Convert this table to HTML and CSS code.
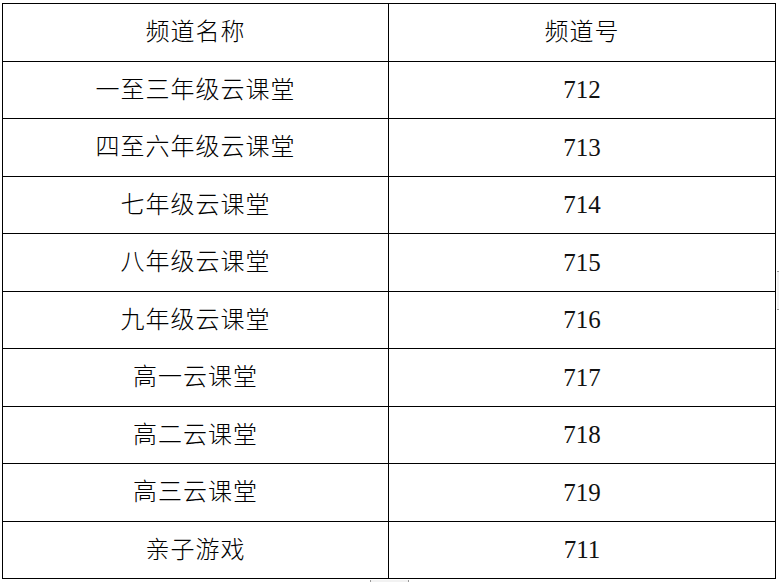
FILE: index.html
```html
<!DOCTYPE html>
<html lang="zh">
<head>
<meta charset="utf-8">
<link rel="stylesheet" href="styles.css">
</head>
<body>
<table class="channels">
  <tr><td>频道名称</td><td>频道号</td></tr>
  <tr><td>一至三年级云课堂</td><td class="num">712</td></tr>
  <tr><td>四至六年级云课堂</td><td class="num">713</td></tr>
  <tr><td>七年级云课堂</td><td class="num">714</td></tr>
  <tr><td>八年级云课堂</td><td class="num">715</td></tr>
  <tr><td>九年级云课堂</td><td class="num">716</td></tr>
  <tr><td>高一云课堂</td><td class="num">717</td></tr>
  <tr><td>高二云课堂</td><td class="num">718</td></tr>
  <tr><td>高三云课堂</td><td class="num">719</td></tr>
  <tr><td>亲子游戏</td><td class="num">711</td></tr>
</table>
<div class="handle-right"></div>
<div class="handle-bottom"></div>
</body>
</html>
```
FILE: styles.css
```css
html, body {
  margin: 0;
  padding: 0;
  background: #fff;
}
body {
  position: relative;
  width: 779px;
  height: 582px;
  overflow: hidden;
  font-family: "Liberation Serif", "Noto Sans CJK SC", serif;
  color: #000;
}
.channels {
  border-collapse: collapse;
  margin: 3px 0 0 2px;
  width: 774px;
  table-layout: fixed;
}
.channels td {
  border: 1.5px solid #000;
  height: 56.5px;
  padding: 0;
  text-align: center;
  vertical-align: middle;
  font-size: 24px;
  letter-spacing: 1px;
  font-weight: 300;
  line-height: 1;
}
.channels td:first-child {
  width: 385px;
}
.channels .num {
  font-size: 25px;
  letter-spacing: 0;
  font-weight: 400;
  color: #111;
}
.handle-right {
  position: absolute;
  left: 777px;
  top: 271px;
  width: 2px;
  height: 37px;
  border-top: 1px solid #999;
  border-bottom: 1px solid #999;
  background: #f2f2f2;
}
.handle-bottom {
  position: absolute;
  left: 370px;
  top: 580px;
  width: 37px;
  height: 2px;
  border-left: 1px solid #999;
  border-right: 1px solid #999;
  background: #f2f2f2;
}
```
